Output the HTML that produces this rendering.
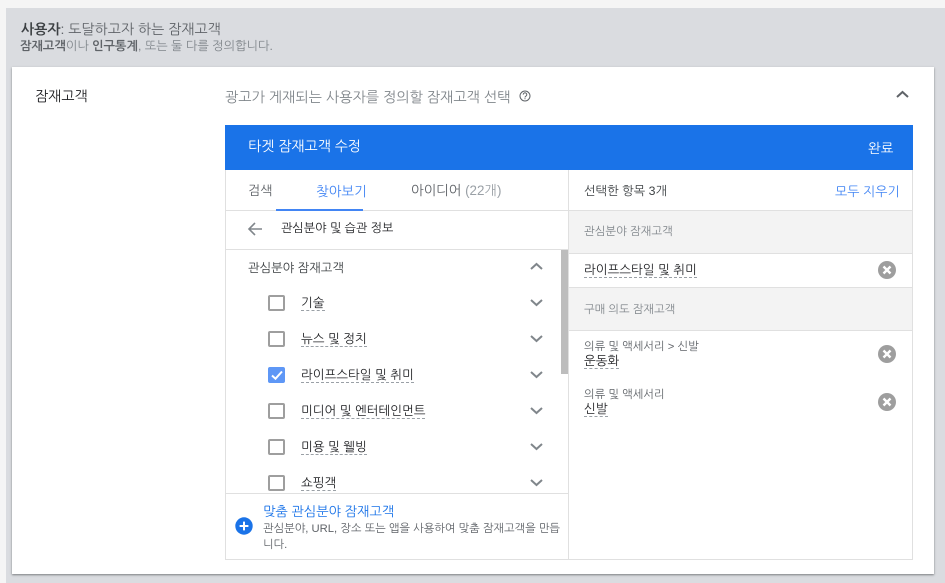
<!DOCTYPE html>
<html lang="ko"><head><meta charset="utf-8"><style>
html,body{margin:0;padding:0;width:945px;height:583px;overflow:hidden;background:#f5f5f5}
body{position:relative;font-family:"Liberation Sans","NanumGothic","Noto Sans CJK KR",sans-serif;color:#3c4043}
.a{position:absolute;white-space:nowrap}
.u{border-bottom:1px dashed #9aa0a6;line-height:17px}
.l{height:15px}
.r{height:15px}
.t{font-size:12.5px;color:#202124}
.line{position:absolute;background:#e0e0e0}
svg{position:absolute;overflow:visible}
.cb{position:absolute;left:268px;width:13px;height:12px;border:2px solid #9e9e9e;border-radius:2px;background:#fff}
</style></head><body>
<div class="a" style="left:6px;top:8px;width:939px;height:575px;background:#dadce0"></div>
<div class="a" style="left:21px;top:21px;font-size:14px;color:#5f6368"><b style="color:#3c4043">사용자</b>: 도달하고자 하는 잠재고객</div>
<div class="a" style="left:20px;top:39px;font-size:12.2px;color:#80868b"><b style="color:#5f6368;font-weight:700">잠재고객</b>이나 <b style="color:#5f6368">인구통계</b>, 또는 둘 다를 정의합니다.</div>
<div class="a" style="left:12px;top:67px;width:922px;height:507px;background:#fff;box-shadow:0 1px 2px rgba(60,64,67,.6)"></div>
<div class="a" style="left:35px;top:88px;font-size:14px;color:#202124">잠재고객</div>
<div class="a" style="left:225px;top:89px;font-size:14.15px;color:#80868b">광고가 게재되는 사용자를 정의할 잠재고객 선택</div>
<svg style="left:518px;top:89px" width="14" height="14" viewBox="0 0 14 14"><circle cx="7" cy="7" r="5" fill="none" stroke="#5f6368" stroke-width="1"/><path d="M5.2 5.6a1.8 1.8 0 1 1 2.8 1.5c-.7.4-1 .7-1 1.4" fill="none" stroke="#5f6368" stroke-width="1"/><rect x="6.5" y="9.2" width="1" height="1" fill="#5f6368"/></svg>
<svg style="left:896px;top:90px" width="13" height="9"><path d="M1 7l5.5-5 5.5 5" fill="none" stroke="#5f6368" stroke-width="2"/></svg>
<div class="a" style="left:225px;top:125px;width:688px;height:45px;background:#1a73e8"></div>
<div class="a" style="left:248px;top:138px;font-size:14px;color:#fff">타겟 잠재고객 수정</div>
<div class="a" style="left:868px;top:140px;font-size:13.5px;color:#fff">완료</div>
<div class="a" style="left:226px;top:493px;width:342px;height:66px;background:#fff;border-top:1px solid #e0e0e0;box-sizing:border-box"></div>
<div class="line" style="left:225px;top:170px;width:1px;height:390px"></div>
<div class="line" style="left:912px;top:170px;width:1px;height:390px"></div>
<div class="line" style="left:225px;top:559px;width:688px;height:1px"></div>
<div class="line" style="left:568px;top:170px;width:1px;height:390px"></div>
<div class="line" style="left:226px;top:210px;width:687px;height:1px"></div>
<div class="line" style="left:226px;top:249px;width:342px;height:1px"></div>
<div class="a" style="left:248px;top:183px;font-size:13px;color:#5f6368">검색</div>
<div class="a" style="left:316px;top:183px;font-size:13.5px;color:#4285f4">찾아보기</div>
<div class="a" style="left:276px;top:209px;width:87px;height:2px;background:#4285f4"></div>
<div class="a" style="left:411px;top:183px;font-size:13.4px;color:#5f6368">아이디어 <span style="color:#9aa0a6">(22개)</span></div>
<svg style="left:247px;top:222px" width="16" height="14"><path d="M15 7H2M8 1L2 7l6 6" fill="none" stroke="#80868b" stroke-width="1.6"/></svg>
<div class="a" style="left:281px;top:221px;font-size:12.1px;color:#202124">관심분야 및 습관 정보</div>
<div class="a" style="left:248px;top:260px;font-size:12.3px;color:#3c4043">관심분야 잠재고객</div>
<svg style="left:530px;top:262px" width="13" height="9"><path d="M1 7l5.5-5 5.5 5" fill="none" stroke="#80868b" stroke-width="2"/></svg>
<div class="a" style="left:561px;top:250px;width:7px;height:124px;background:#bdbdbd"></div>

<div class="cb" style="top:295px"></div><div class="a t u l" style="left:301px;top:295px">기술</div>
<div class="cb" style="top:331px"></div><div class="a t u l" style="left:301px;top:331px">뉴스 및 정치</div>
<div class="cb" style="top:367px;background:#5e97f6;border-color:#5e97f6"></div>
<svg style="left:271px;top:369px" width="12" height="12"><path d="M1 6.5l3.5 3.2L11 2.5" fill="none" stroke="#fff" stroke-width="2"/></svg>
<div class="a t u l" style="left:301px;top:367px">라이프스타일 및 취미</div>
<div class="cb" style="top:403px"></div><div class="a t u l" style="left:301px;top:403px">미디어 및 엔터테인먼트</div>
<div class="cb" style="top:439px"></div><div class="a t u l" style="left:301px;top:439px">미용 및 웰빙</div>
<div class="cb" style="top:475px"></div><div class="a t u l" style="left:301px;top:475px">쇼핑객</div>
<svg style="left:530px;top:298px" width="13" height="9"><path d="M1 2l5.5 5 5.5-5" fill="none" stroke="#80868b" stroke-width="2"/></svg>
<svg style="left:530px;top:334px" width="13" height="9"><path d="M1 2l5.5 5 5.5-5" fill="none" stroke="#80868b" stroke-width="2"/></svg>
<svg style="left:530px;top:370px" width="13" height="9"><path d="M1 2l5.5 5 5.5-5" fill="none" stroke="#80868b" stroke-width="2"/></svg>
<svg style="left:530px;top:406px" width="13" height="9"><path d="M1 2l5.5 5 5.5-5" fill="none" stroke="#80868b" stroke-width="2"/></svg>
<svg style="left:530px;top:442px" width="13" height="9"><path d="M1 2l5.5 5 5.5-5" fill="none" stroke="#80868b" stroke-width="2"/></svg>
<svg style="left:530px;top:478px" width="13" height="9"><path d="M1 2l5.5 5 5.5-5" fill="none" stroke="#80868b" stroke-width="2"/></svg>

<svg style="left:235px;top:517px" width="18" height="18"><circle cx="9" cy="9" r="8.7" fill="#1a73e8"/><path d="M9 4.6v8.8M4.6 9h8.8" stroke="#fff" stroke-width="2"/></svg>
<div class="a" style="left:263px;top:504px;font-size:13.2px;color:#1a73e8">맞춤 관심분야 잠재고객</div>
<div class="a" style="left:263px;top:521px;font-size:11.25px;line-height:16px;color:#5f6368">관심분야, URL, 장소 또는 앱을 사용하여 맞춤 잠재고객을 만듭<br>니다.</div>

<div class="a" style="left:584px;top:183px;font-size:12.3px;color:#3c4043">선택한 항목 3개</div>
<div class="a" style="left:835px;top:184px;font-size:13px;color:#4285f4">모두 지우기</div>
<div class="a" style="left:569px;top:211px;width:343px;height:42px;background:#f3f3f3;border-bottom:1px solid #e0e0e0"></div>
<div class="a" style="left:584px;top:224px;font-size:11.4px;color:#80868b">관심분야 잠재고객</div>
<div class="a t u r" style="left:584px;top:262px">라이프스타일 및 취미</div>
<div class="a" style="left:569px;top:287px;width:343px;height:42px;background:#f3f3f3;border-top:1px solid #e0e0e0;border-bottom:1px solid #e0e0e0"></div>
<div class="a" style="left:584px;top:302px;font-size:11.3px;color:#80868b">구매 의도 잠재고객</div>
<div class="a" style="left:584px;top:339px;font-size:11.3px;color:#5f6368">의류 및 액세서리 &gt; 신발</div>
<div class="a t u r" style="left:584px;top:353px">운동화</div>
<div class="a" style="left:584px;top:387px;font-size:11.3px;color:#5f6368">의류 및 액세서리</div>
<div class="a t u r" style="left:584px;top:401px">신발</div>
<svg style="left:878px;top:261px" width="18" height="18"><circle cx="9" cy="9" r="9" fill="#9e9e9e"/><path d="M5.5 5.5l7 7M12.5 5.5l-7 7" stroke="#fff" stroke-width="2.4"/></svg>
<svg style="left:878px;top:345px" width="18" height="18"><circle cx="9" cy="9" r="9" fill="#9e9e9e"/><path d="M5.5 5.5l7 7M12.5 5.5l-7 7" stroke="#fff" stroke-width="2.4"/></svg>
<svg style="left:878px;top:393px" width="18" height="18"><circle cx="9" cy="9" r="9" fill="#9e9e9e"/><path d="M5.5 5.5l7 7M12.5 5.5l-7 7" stroke="#fff" stroke-width="2.4"/></svg>
</body></html>
